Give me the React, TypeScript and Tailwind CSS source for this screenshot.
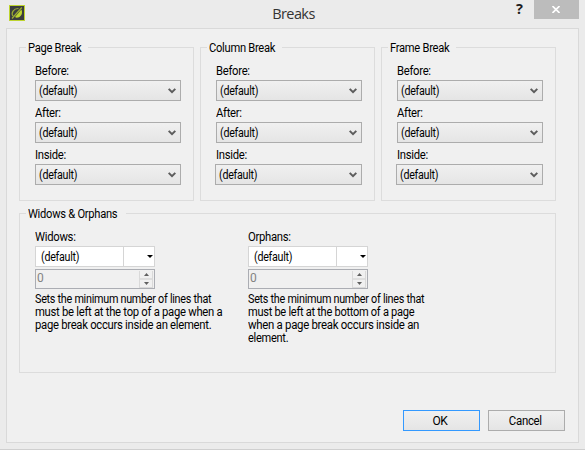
import React from "react";

function Select({ wide = false }: { wide?: boolean }) {
  return (
    <div
      className={`flex h-[21px] items-center justify-between border border-[#acacac] bg-linear-to-b from-[#f0f0f0] to-[#e5e5e5] pr-[4px] pl-[3px] ${
        wide ? "-ml-px w-[147px]" : "w-[146px]"
      }`}
    >
      <span className="origin-left scale-x-[0.89]">(default)</span>
      <svg width="8" height="6" viewBox="0 0 8 6" fill="none" stroke="#5c5c5c" strokeWidth="2">
        <path d="M.7.9 4 4.200 7.300.9" />
      </svg>
    </div>
  );
}

function BreakGroup({ title, wideLast = false }: { title: string; wideLast?: boolean }) {
  return (
    <fieldset className="h-[160px] w-[175px] border border-[#dcdcdc]">
      <legend className="ml-[6px] h-[13px] px-[2px] leading-[14px]">
        <span className="inline-block origin-left scale-x-[0.93]">{title}</span>
      </legend>
      <div className="flex flex-col pt-[10px] pl-[15px]">
        {["Before:", "After:", "Inside:"].map((label, i) => (
          <div key={label} className="h-[42px]">
            <div className="h-[16px] origin-left scale-x-[0.94] leading-[15px]">{label}</div>
            <Select wide={wideLast && i === 2} />
          </div>
        ))}
      </div>
    </fieldset>
  );
}

type Line = { text: string; fit: string };

function Lines({ name, lines }: { name: string; lines: Line[] }) {
  return (
    <div className="w-[213px]">
      <div className="h-[16px] origin-left scale-x-[0.94] leading-[15px]">{name}</div>
      <div className="flex h-[21px] w-[120px] border border-[#d5d5d5] bg-white">
        <div className="flex w-[88px] items-center border-r border-[#d5d5d5] pl-[5px]">
          <span className="origin-left scale-x-[0.89]">(default)</span>
        </div>
        <div className="flex flex-1 items-center justify-end pr-px">
          <svg width="6" height="3" viewBox="0 0 6 3">
            <path d="M0 0h6L3 3z" fill="#000" />
          </svg>
        </div>
      </div>
      <div className="mt-[2px] flex h-[20px] w-[120px] justify-between border border-[#abadb3] pr-px">
        <span className="pl-px leading-[16px] text-[#838383]">0</span>
        <div className="mt-px flex h-[17px] w-[14px] flex-col border-x border-b border-[#d9d9d9]">
          <div className="flex h-[9px] items-center justify-center border-b-2 border-[#dedede]">
            <svg width="5" height="3" viewBox="0 0 5 3">
              <path d="M0 3h5L2.5 0z" fill="#606060" />
            </svg>
          </div>
          <div className="flex h-[7px] items-center justify-center">
            <svg width="5" height="3" viewBox="0 0 5 3">
              <path d="M0 0h5L2.5 3z" fill="#606060" />
            </svg>
          </div>
        </div>
      </div>
      <div className="mt-[4px] leading-[13px] whitespace-nowrap">
        {lines.map((line) => (
          <div key={line.text} className={`origin-left ${line.fit}`}>
            {line.text}
          </div>
        ))}
      </div>
    </div>
  );
}

const widows: Line[] = [
  { text: "Sets the minimum number of lines that", fit: "scale-x-[0.9]" },
  { text: "must be left at the top of a page when a", fit: "scale-x-[0.94]" },
  { text: "page break occurs inside an element.", fit: "scale-x-[0.94]" },
];

const orphans: Line[] = [
  { text: "Sets the minimum number of lines that", fit: "scale-x-[0.9]" },
  { text: "must be left at the bottom of a page", fit: "scale-x-[0.92]" },
  { text: "when a page break occurs inside an", fit: "scale-x-[0.95]" },
  { text: "element.", fit: "scale-x-[0.92]" },
];

export default function App() {
  return (
    <div className="flex h-[450px] w-[585px] flex-col border-b border-[#cfcfcf] bg-[#ebebeb] font-['Roboto','Liberation_Sans',sans-serif] text-[12px] tracking-[-0.3px] text-black">
      <header className="flex h-[28px] justify-between">
        <div className="w-[80px] pt-[5px] pl-[9px]">
          <svg width="16" height="16" viewBox="0 0 16 16">
            <rect x="0.5" y="0.5" width="15" height="15" fill="#3b3d3e" stroke="#bed42f" />
            <path d="M12.300 4.500C14.300 8 12 12.800 7.500 12.800L6 12z" fill="#bed42f" />
            <path d="M4 11C1.800 8 4.500 3.300 9.500 3.500M3 13.500 12.800 2.500" fill="none" stroke="#9dae32" strokeWidth="1.200" />
          </svg>
        </div>
        <h1 className="pt-[3px] font-['Open_Sans',sans-serif] text-[14.5px] leading-[21px] tracking-[-0.6px] text-[#333]">Breaks</h1>
        <div className="flex w-[78px] items-start">
          <span className="w-[20px] pl-[9px] font-['Open_Sans',sans-serif] text-[14.5px] leading-[18px] font-bold text-[#1e1e1e]">?</span>
          <div className="ml-auto flex h-[19px] w-[45px] items-center justify-center bg-[#bcbcbc]">
            <svg width="8" height="7" viewBox="0 0 8 7" stroke="#fff" strokeWidth="1.600">
              <path d="M.5 0 7.500 7M7.500 0 .5 7" />
            </svg>
          </div>
          <div className="w-[6px] shrink-0" />
        </div>
      </header>
      <main className="ml-[6px] h-[415px] w-[573px] border border-[#d9d9d9] bg-[#f0f0f0] pt-[12px] pl-[12px]">
        <div className="flex gap-[6px]">
          <BreakGroup title="Page Break" />
          <BreakGroup title="Column Break" wideLast />
          <BreakGroup title="Frame Break" wideLast />
        </div>
        <fieldset className="mt-[6px] h-[166px] w-[537px] border border-[#dcdcdc]">
          <legend className="ml-[6px] h-[13px] px-[2px] leading-[14px]">
            <span className="inline-block origin-left scale-x-[0.93]">Widows &amp; Orphans</span>
          </legend>
          <div className="flex pt-[10px] pl-[15px]">
            <Lines name="Widows:" lines={widows} />
            <Lines name="Orphans:" lines={orphans} />
          </div>
        </fieldset>
        <div className="mt-[37px] flex gap-[8px] pl-[384px]">
          <button className="h-[21px] w-[77px] border border-[#3399ff] bg-linear-to-b from-[#f0f0f0] to-[#e5e5e5] pr-[3px]">OK</button>
          <button className="h-[21px] w-[77px] border border-[#acacac] bg-linear-to-b from-[#f0f0f0] to-[#e5e5e5] pr-[3px]">
            <span className="inline-block scale-x-[0.95]">Cancel</span>
          </button>
        </div>
      </main>
    </div>
  );
}
